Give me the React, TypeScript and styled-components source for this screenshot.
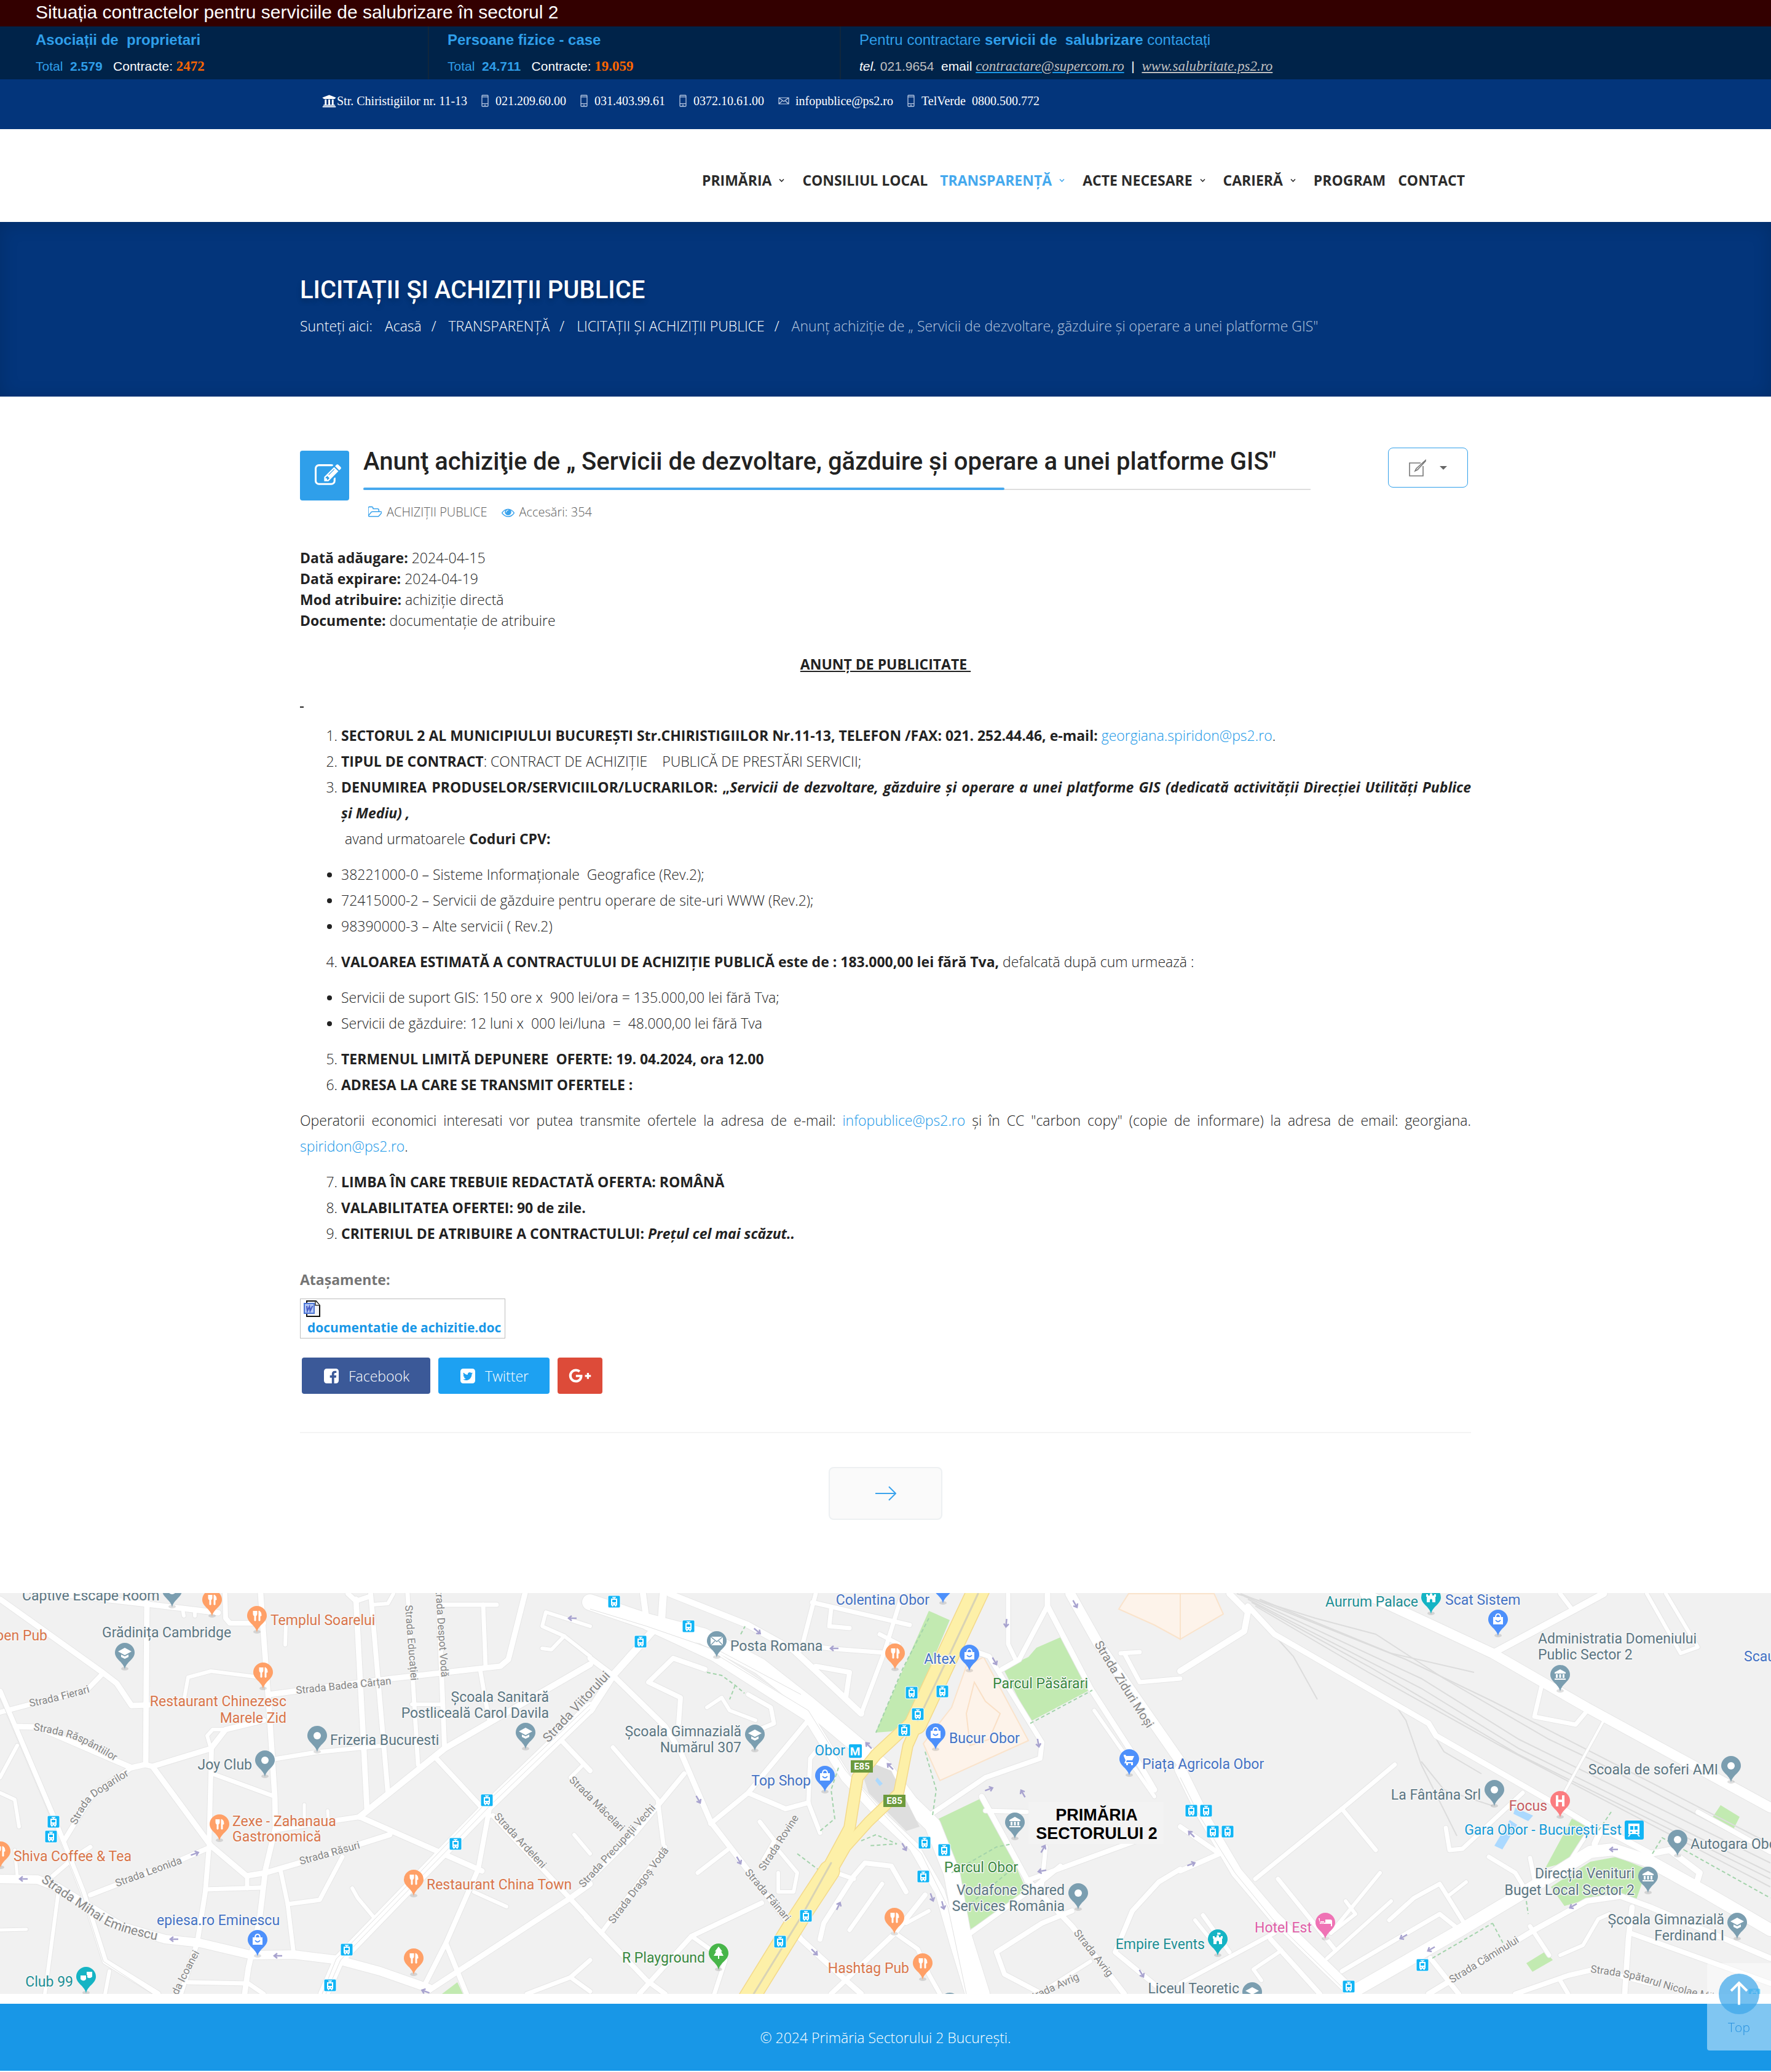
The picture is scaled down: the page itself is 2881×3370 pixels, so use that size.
import React from "react";
import styled, { createGlobalStyle } from "styled-components";
import { FaGooglePlusG, FaUniversity } from "react-icons/fa";

const sans = '"Open Sans", "Noto Sans", sans-serif';
const heading = 'Roboto, "Open Sans", sans-serif';
const arial = '"Liberation Sans", Arial, sans-serif';
const times = '"Liberation Serif", "Times New Roman", serif';

const color = {
  ink: "#222222",
  accent: "#1897e7",
  sky: "#2f9fea",
  navy: "#03357b",
};

const GlobalStyle = createGlobalStyle`
  * { box-sizing: border-box; }
  body {
    margin: 0;
    background: #fff;
    color: ${color.ink};
    font: 300 23px/42px ${sans};
  }
  a { color: inherit; text-decoration: none; }
  b, strong { font-weight: 700; }
  h1, h2, h3, p, ul, ol { margin: 0; padding: 0; }
  button { font: inherit; cursor: pointer; }
`;

const Container = styled.div`
  width: 100%;
  max-width: 1905px;
  margin: 0 auto;
`;

/* ---------- contract figures ---------- */

const Notice = styled.div`
  height: 43px;
  padding-left: 58px;
  background: #330000;
  color: #fff;
  font: 30px/40px ${arial};
`;

const Figures = styled.div`
  display: grid;
  grid-template-columns: 670fr 670fr 1513fr;
  padding-left: 28px;
  background: #002349;
  font: 21px/43px ${arial};
  color: #fff;
`;

const Figure = styled.section`
  padding-left: 30px;
  border-right: 2px solid #10263c;
  white-space: pre;
  &:last-child { border-right: 0; }
`;

const FigureTitle = styled.h2`
  color: ${color.sky};
  font-size: 24px;
  font-weight: 400;
`;

const Blue = styled.span`color: ${color.sky};`;

const Signed = styled.strong`
  color: #ff6600;
  font-family: ${times};
  font-size: 23px;
`;

const Soft = styled.span`color: #c0c0c0;`;

const SerifLink = styled.a<{ $line: string }>`
  color: #c0c0c0;
  font: italic 23px ${times};
  text-decoration: underline;
  text-decoration-color: ${(p) => p.$line};
`;

/* ---------- contact bar ---------- */

const ContactBar = styled.div`
  height: 81px;
  padding-top: 23px;
  background: ${color.navy};
  color: #fff;
  font: 20px/24px ${times};
`;

const ContactList = styled(Container)`
  display: flex;
  gap: 23px;
  padding-left: 36px;
`;

const Contact = styled.span<{ $gap: number }>`
  display: flex;
  align-items: center;
  gap: ${(p) => p.$gap}px;
  white-space: pre;
`;

const Phone = () => (
  <svg width="12" height="20" viewBox="0 0 12 20" fill="none" stroke="#b9c8e2" strokeWidth="1.3">
    <rect x="1" y="1" width="10" height="18" rx="1" />
    <path d="M1 3.6h10M1 14.6h10M5 17h2" />
  </svg>
);

const Mail = () => (
  <svg width="18" height="12" viewBox="0 0 18 12" fill="none" stroke="#c6d2e8" strokeWidth="1.2">
    <path d="M1 1h16v10H1zM1 1l8 6 8-6M1 11l6-5.5M17 11l-6-5.5" />
  </svg>
);

/* ---------- navigation ---------- */

const Nav = styled.nav`
  padding: 67px 0 51px;
  font-size: 23px;
  font-weight: 700;
  line-height: 33px;
`;

const NavList = styled(Container)`
  display: flex;
  justify-content: flex-end;
`;

const NavLink = styled.a<{ $active?: boolean }>`
  display: flex;
  align-items: center;
  padding: 0 10px;
  color: ${(p) => (p.$active ? "#45a9ee" : "#2b2b2b")};
  svg { margin: 0 9px 0 12px; }
`;

const Caret = () => (
  <svg width="9" height="7" viewBox="0 0 9 7" fill="none" stroke="currentColor" strokeWidth="1.6">
    <path d="M1 1.5l3.5 3.5L8 1.5" />
  </svg>
);

const menu = [
  { label: "PRIMĂRIA", more: true },
  { label: "CONSILIUL LOCAL" },
  { label: "TRANSPARENȚĂ", more: true, active: true },
  { label: "ACTE NECESARE", more: true },
  { label: "CARIERĂ", more: true },
  { label: "PROGRAM" },
  { label: "CONTACT" },
];

/* ---------- page heading ---------- */

const Hero = styled.header`
  padding: 87px 0 98px;
  background: ${color.navy};
  box-shadow: inset 0 3px 30px rgba(0, 0, 0, 0.15);
  color: #fff;
`;

const HeroTitle = styled.h1`
  font: 500 40px/48px ${heading};
  text-shadow: 0 5px 8px rgba(0, 0, 0, 0.2);
`;

const Crumbs = styled.div`
  display: flex;
  flex-wrap: wrap;
  margin-top: 18px;
  line-height: 33px;
`;

const Crumb = styled.a`
  margin-left: 20px;
  &:not(:last-child)::after { content: "/"; margin-left: 16px; }
`;

const CurrentCrumb = styled.span`
  margin-left: 20px;
  color: #b6c6de;
`;

/* ---------- article ---------- */

const Article = styled(Container)`
  padding-top: 82px;
`;

const ArticleHead = styled.header`
  display: flex;
  align-items: flex-start;
`;

const Badge = styled.div`
  display: grid;
  place-items: center;
  flex: none;
  width: 80px;
  height: 81px;
  margin: 6px 23px 0 0;
  padding-left: 10px;
  border-radius: 4px;
  background: ${color.sky};
  color: #fff;
`;

const TitleColumn = styled.div`flex: 1;`;

const Title = styled.h2`
  padding-bottom: 18px;
  font: 500 40px/48px ${heading};
`;

const Rule = styled.div`
  height: 4px;
  border-bottom: 2px solid #dedede;
  &::before {
    content: "";
    display: block;
    width: 1043px;
    max-width: 100%;
    height: 4px;
    border-radius: 2px;
    background: #47a9ee;
  }
`;

const Meta = styled.div`
  display: flex;
  align-items: center;
  gap: 8px;
  padding: 22px 0 0 8px;
  color: #5c5c5c;
  font-size: 20px;
  line-height: 28px;
  svg { color: #3ba3ec; }
  a { margin-right: 15px; }
`;

const Tools = styled.div`
  display: flex;
  justify-content: flex-end;
  flex: 0 0 261px;
  padding: 1px 5px 0 0;
`;

const ToolButton = styled.button`
  display: flex;
  align-items: center;
  justify-content: center;
  gap: 22px;
  width: 130px;
  height: 65px;
  border: 1px solid ${color.sky};
  border-radius: 8px;
  background: #fff;
`;

const Facts = styled.p`
  margin-top: 43px;
  line-height: 34px;
`;

const Heading = styled.h3`
  margin: 33px 0 16px;
  font-size: 23px;
  text-align: center;
  text-decoration: underline;
  white-space: pre;
`;

const Blank = styled.p`
  text-decoration: underline;
  white-space: pre;
`;

const Steps = styled.ol`
  margin-top: 16px;
  padding-left: 67px;
  text-align: justify;
`;

const Bullets = styled.ul`
  margin-top: 16px;
  padding-left: 67px;
`;

const Line = styled.span`
  display: block;
  white-space: pre;
`;

const Text = styled.p`
  margin-top: 16px;
  text-align: justify;
`;

const MailLink = styled.a`color: ${color.accent};`;

const FilesTitle = styled.h3`
  margin: 38px 0 14px;
  color: #757575;
  font-size: 23px;
  line-height: 33px;
`;

const FileTable = styled.table`
  border: 1px solid #bdbdbd;
  border-collapse: separate;
  border-spacing: 0;
  td { height: 63px; padding: 1px 6px 0 5px; vertical-align: top; }
  svg { display: block; }
`;

const FileLink = styled.a`
  display: block;
  padding-left: 6px;
  color: ${color.accent};
  font-size: 21px;
  font-weight: 700;
  line-height: 33px;
`;

const Share = styled.div`
  display: flex;
  gap: 13px;
  margin: 31px 0 62px 3px;
`;

const ShareLink = styled.a<{ $bg: string; $pad: number }>`
  display: flex;
  align-items: center;
  gap: 14px;
  height: 59px;
  padding: 0 ${(p) => p.$pad}px;
  border-radius: 4px;
  background: ${(p) => p.$bg};
  color: #fff;
`;

const Pager = styled.div`
  display: flex;
  justify-content: center;
  padding: 55px 0 119px;
  border-top: 2px solid #f4f4f4;
`;

const NextButton = styled.button`
  display: grid;
  place-items: center;
  width: 185px;
  height: 86px;
  border: 2px solid #edf0f2;
  border-radius: 8px;
  background: #fafafa;
`;

const Glyph = ({ size, d }: { size: number; d: string }) => (
  <svg width={size} height={size} viewBox="0 0 1792 1792" fill="currentColor" aria-hidden="true">
    <path d={d} />
  </svg>
);

const glyph = {
  edit: "M888 1184l116-116-152-152-116 116v56h96v96h56zm440-720q-16-16-33 1l-350 350q-17 17-1 33t33-1l350-350q17-17 1-33zm80 594v190q0 119-84.5 203.5t-203.5 84.5h-832q-119 0-203.5-84.5t-84.5-203.5v-832q0-119 84.5-203.5t203.5-84.5h832q63 0 117 25 15 7 18 23 3 17-9 29l-49 49q-14 14-32 8-23-6-45-6h-832q-66 0-113 47t-47 113v832q0 66 47 113t113 47h832q66 0 113-47t47-113v-126q0-13 9-22l64-64q15-15 35-7t20 29zm-96-738l288 288-672 672h-288v-288zm444 132l-92 92-288-288 92-92q28-28 68-28t68 28l152 152q28 28 28 68t-28 68z",
  folder: "M1717 931q0-35-53-35h-1088q-40 0-85.5 21.5t-71.5 52.5l-294 363q-18 24-18 40 0 35 53 35h1088q40 0 86-22t71-53l294-363q18-22 18-39zm-1141-163h768v-160q0-40-28-68t-68-28h-576q-40 0-68-28t-28-68v-64q0-40-28-68t-68-28h-320q-40 0-68 28t-28 68v853l256-315q44-53 116-87.5t140-34.5zm1269 163q0 62-46 120l-295 363q-43 53-116 87.5t-140 34.5h-1088q-92 0-158-66t-66-158v-960q0-92 66-158t158-66h320q92 0 158 66t66 158v32h544q92 0 158 66t66 158v160h192q54 0 99 24.5t67 70.5q15 32 15 68z",
  eye: "M1664 960q-152-236-381-353 61 104 61 225 0 185-131.5 316.5t-316.5 131.5-316.5-131.5-131.5-316.5q0-121 61-225-229 117-381 353 133 205 333.5 326.5t434.5 121.5 434.5-121.5 333.5-326.5zm-720-384q0-20-14-34t-34-14q-125 0-214.5 89.5t-89.5 214.5q0 20 14 34t34 14 34-14 14-34q0-86 61-147t147-61q20 0 34-14t14-34zm848 384q0 34-20 69-140 230-376.5 368.5t-499.5 138.5-499.5-139-376.5-368q-20-35-20-69t20-69q140-229 376.5-368t499.5-139 499.5 139 376.5 368q20 35 20 69z",
  facebook: "M1376 128q119 0 203.5 84.5t84.5 203.5v960q0 119-84.5 203.5t-203.5 84.5h-188v-595h199l30-232h-229v-148q0-56 23.5-84t91.5-28l122-1v-207q-63-9-178-9-136 0-217.5 80t-81.5 226v171h-200v232h200v595h-532q-119 0-203.5-84.5t-84.5-203.5v-960q0-119 84.5-203.5t203.5-84.5h960z",
  twitter: "M1408 610q-56 25-121 34 68-40 93-117-65 38-134 51-61-66-153-66-87 0-148.5 61.5t-61.5 148.5q0 29 5 48-129-7-242-65t-192-155q-29 50-29 106 0 114 91 175-47-1-100-26v2q0 75 50 133.5t123 72.5q-29 8-51 8-13 0-39-4 21 63 74.5 104t121.5 42q-116 90-261 90-26 0-50-3 148 94 322 94 112 0 210-35.5t168-95 120.5-137 75-162 24.5-168.5q0-18-1-27 63-45 105-109zm256-194v960q0 119-84.5 203.5t-203.5 84.5h-960q-119 0-203.5-84.5t-84.5-203.5v-960q0-119 84.5-203.5t203.5-84.5h960q119 0 203.5 84.5t84.5 203.5z",
};

const WordIcon = () => (
  <svg width="28" height="29" viewBox="0 0 28 29">
    <path d="M5 2h15l6 7v18H5z" fill="#f4f4f6" stroke="#111" strokeWidth="2" />
    <path d="M19 2v7h7" fill="#fff" stroke="#333" strokeWidth="1.5" />
    <rect x="1" y="6" width="16" height="16" fill="#b5c9f6" stroke="#4a74d4" strokeWidth="2" />
    <path d="M5 10l1 8 3.5-7 1 7 4-8" fill="none" stroke="#4a5fc8" strokeWidth="2.2" />
  </svg>
);

/* ---------- map ---------- */

type Pt = [number, number];

// The drawing is split in three sheets laid side by side, each with its own grid.
const place = (sheet: number, x: number, y: number): Pt => [
  Math.round(sheet * 960 + x * 0.6123),
  Math.round(y * 0.5166 - 31),
];

const placeAll = (sheet: number, points: string): Pt[] =>
  points.split(" ").map((p) => place(sheet, ...(p.split(",").map(Number) as Pt)));

const trace = (sheet: number, points: string) =>
  placeAll(sheet, points).map((p) => p.join(",")).join(" ");

// Rounds the corners of a street so that its name runs along a smooth line.
const curve = (sheet: number, points: string) => {
  const pts = placeAll(sheet, points);
  let d = `M${pts[0].join(" ")}`;
  if (pts.length === 2) return `${d}L${pts[1].join(" ")}`;
  for (let i = 1; i < pts.length - 1; i++) {
    const last = i === pts.length - 2;
    const end = last ? pts[i + 1] : [(pts[i][0] + pts[i + 1][0]) / 2, (pts[i][1] + pts[i + 1][1]) / 2];
    d += `Q${pts[i].join(" ")} ${end.join(" ")}`;
  }
  return d;
};

const roads: [number, number, string][] = [
  [0, 9, "0,80 275,312 310,345 350,415 395,412"],
  [0, 8, "0,435 100,405 230,365 275,312"],
  [0, 9, "390,90 387,600"],
  [0, 9, "150,61 390,95 580,122"],
  [0, 6, "485,110 488,132"],
  [0, 6, "517,115 518,132"],
  [0, 8, "598,61 600,140 610,155 700,155"],
  [0, 9, "692,61 700,200 715,430 730,700 732,800 705,930 690,1090 660,1240 650,1323"],
  [0, 6, "490,390 500,325 560,305 690,325"],
  [0, 6, "760,160 757,222"],
  [0, 9, "715,380 1040,330 1330,290 1350,270 1395,61"],
  [0, 9, "945,80 975,740"],
  [0, 8, "985,61 1030,690"],
  [0, 8, "925,61 945,85 985,70"],
  [0, 6, "990,96 1030,92 1045,61"],
  [0, 7, "1083,61 1110,600"],
  [0, 8, "1165,61 1180,540"],
  [0, 7, "1165,97 1320,97"],
  [0, 7, "1283,97 1290,295"],
  [0, 7, "1275,300 1290,400 1300,460"],
  [0, 6, "1095,410 1170,410"],
  [0, 10, "1568,285 1180,550 955,765"],
  [0, 8, "955,765 900,775 735,805"],
  [0, 9, "955,765 1280,935"],
  [0, 9, "40,480 100,482 350,610 385,600 405,605 560,550 600,490 700,460"],
  [0, 6, "560,550 550,510 565,490 600,490"],
  [0, 9, "405,605 560,855 655,950 705,940 840,895 1035,820"],
  [0, 8, "562,550 555,860 545,1000 525,1160 480,1323"],
  [0, 7, "565,630 730,700"],
  [0, 7, "730,583 840,562 1020,540"],
  [0, 8, "350,610 250,690 205,770 170,840"],
  [0, 9, "0,370 140,760 220,1000 280,1220 420,1323"],
  [0, 6, "0,640 45,540"],
  [0, 6, "0,690 40,710 50,795"],
  [0, 14, "0,960 100,962 150,985 320,1110 440,1150 530,1162 670,1200 780,1198 900,1215 1010,1250 1140,1305"],
  [0, 9, "1140,1310 1515,1020 1568,975"],
  [0, 8, "240,1010 480,900 560,860"],
  [0, 7, "140,950 200,890 240,860"],
  [0, 6, "155,1000 120,1323"],
  [0, 5, "0,1120 70,1118"],
  [0, 7, "545,993 695,988"],
  [0, 7, "657,950 657,990"],
  [0, 7, "745,930 765,1040 780,1200"],
  [0, 7, "765,1040 850,1025 910,890"],
  [0, 6, "935,990 950,1020 1000,1090"],
  [0, 8, "1300,740 1270,930 1185,1160 1125,1300"],
  [0, 6, "1260,1000 1345,1048"],
  [0, 8, "1185,1165 1240,1323"],
  [0, 7, "500,1285 660,1290 700,1323"],
  [0, 6, "280,1323 290,1250"],
  [0, 8, "1155,575 1300,760"],
  [0, 8, "1310,760 1568,1090"],
  [0, 8, "1480,510 1568,620"],
  [0, 6, "1515,640 1550,600"],
  [0, 6, "1568,165 1450,120 1440,165 1500,195 1568,260"],
  [0, 6, "1500,195 1465,238 1440,235"],
  [0, 7, "1400,1323 1515,1270 1568,1215"],
  [0, 7, "1515,1270 1568,1315"],
  [0, 6, "1525,820 1568,880"],
  [0, 5, "40,870 45,950"],
  [0, 5, "808,725 808,790"],
  [0, 5, "870,745 872,775"],
  [0, 18, "1568,420 1300,725 1100,970 900,1215 860,1323"],

  [1, 26, "0,90 150,150 300,195 450,290 580,410 700,530 780,610 850,720 910,790 960,940 990,1130 1040,1323"],
  [1, 16, "150,160 330,260 580,450 680,640 780,770 860,860 930,1000 970,1170 1010,1323"],
  [1, 12, "0,430 60,320 190,150 195,61"],
  [1, 10, "150,150 140,61"],
  [1, 9, "0,265 60,320 200,480 240,560 320,780 560,1150 680,1280 720,1323"],
  [1, 8, "320,785 420,690 580,460"],
  [1, 8, "420,690 520,740 580,720"],
  [1, 7, "610,815 580,720 585,580 600,560"],
  [1, 8, "250,630 110,830 0,960"],
  [1, 8, "-10,1080 150,1280 200,1323"],
  [1, 7, "200,860 30,1130"],
  [1, 7, "60,545 180,710 195,850"],
  [1, 8, "130,1323 270,1140 455,1035"],
  [1, 7, "270,1140 360,1215 330,1323"],
  [1, 6, "310,420 350,390 370,430 440,460"],
  [1, 7, "420,380 480,420 488,470 430,500"],
  [1, 8, "305,300 220,265 155,340 240,390 235,470"],
  [1, 10, "210,61 420,160 540,240 640,350 720,440"],
  [1, 7, "600,61 560,240"],
  [1, 7, "590,90 850,160"],
  [1, 7, "640,110 635,165 690,170"],
  [1, 7, "570,225 650,237 780,248"],
  [1, 8, "600,290 690,310 680,390"],
  [1, 7, "830,61 780,250 720,440"],
  [1, 7, "770,190 820,220"],
  [1, 6, "500,870 550,940 540,1000 500,1000 500,940"],
  [1, 7, "365,870 285,940"],
  [1, 7, "450,780 490,840 460,900"],
  [1, 7, "775,975 690,1120"],
  [1, 8, "610,1150 620,1100 700,950 730,910 800,920 840,1000"],
  [1, 7, "640,935 700,960"],
  [1, 8, "640,1323 810,1130 890,1010"],
  [1, 7, "810,1130 870,1180 900,1260 930,1323"],
  [1, 6, "840,1100 900,1060"],
  [1, 16, "1275,61 1350,220 1568,590"],
  [1, 9, "1215,61 1215,100 1330,360 1460,600 1500,680"],
  [1, 8, "1215,100 1140,270 1095,300"],
  [1, 7, "1110,61 1110,220 1130,270"],
  [1, 8, "1000,235 1060,260 1200,530 1195,580 1050,640 900,760"],
  [1, 9, "1040,700 1160,960 1280,1110 1420,1323"],
  [1, 8, "1160,965 1450,840"],
  [1, 8, "1000,1140 1180,985 1250,920"],
  [1, 7, "1200,980 1210,860"],
  [1, 8, "1568,930 1510,970 1440,1060 1395,1190 1530,1323"],
  [1, 8, "1080,1190 1200,1100 1280,1060"],
  [1, 8, "1080,1190 1100,1260 1200,1323"],
  [1, 6, "1220,1300 1330,1220"],
  [1, 6, "1340,430 1500,700"],
  [1, 7, "1420,250 1460,340 1568,330"],
  [1, 7, "1410,250 1460,245"],
  [1, 7, "1050,745 1160,750"],

  [2, 16, "490,61 830,250 1080,420 1568,735"],
  [2, 11, "830,250 1050,110 1125,61"],
  [2, 7, "1010,61 1040,110"],
  [2, 10, "130,61 180,120 170,180 0,305"],
  [2, 9, "180,100 250,190 660,470 680,510 990,720 1100,800"],
  [2, 20, "460,1315 740,1125 1000,940 1090,875 1150,868 1250,905 1400,1005 1568,1120"],
  [2, 10, "1100,850 1120,800 1250,880 1300,870 1380,940 1370,980"],
  [2, 18, "0,615 60,760 150,940 250,1080 460,1323"],
  [2, 7, "200,960 430,740 570,600"],
  [2, 7, "430,740 520,870"],
  [2, 7, "260,960 410,1180"],
  [2, 7, "430,1250 560,1160 690,1070 730,1110"],
  [2, 7, "555,1090 620,1020 690,975 760,1110"],
  [2, 6, "715,1010 760,970"],
  [2, 6, "390,1210 560,1030"],
  [2, 6, "400,1130 530,940"],
  [2, 6, "440,1030 465,1070 400,1130"],
  [2, 7, "705,800 715,870 750,865 910,690"],
  [2, 7, "820,890 890,940 910,980"],
  [2, 7, "930,895 940,960"],
  [2, 7, "960,350 940,450 1050,475 1085,425"],
  [2, 4, "1125,460 1015,700"],
  [2, 6, "1240,61 1330,250 1375,230 1290,61"],
  [2, 8, "1375,750 1568,875"],
  [2, 9, "660,1323 940,1120 1080,1030 1170,1015 1250,1050 1568,1210"],
  [2, 9, "1200,1050 1190,1150 1180,1323"],
  [2, 8, "1195,1130 1568,1290"],
  [2, 8, "890,1323 1030,1265 1100,1245 1250,1290"],
  [2, 7, "1010,1280 1030,1323"],
  [2, 8, "0,795 105,880 0,935"],
  [2, 7, "0,1290 250,1130"],
  [2, 7, "60,1075 130,1190"],
  [2, 6, "40,1090 80,1150"],
  [2, 8, "240,1150 370,1323"],
  [2, 6, "270,1185 195,1245 215,1280"],
  [2, 8, "665,1210 740,1323"],
  [2, 7, "930,1110 980,1200"],
  [2, 6, "1010,1200 1070,1170 1110,1085 1140,1070"],
  [2, 6, "1080,820 1020,930"],
];

const rails: [number, string][] = [
  [2, "150,61 360,140 520,190 700,330 980,520 1120,600 1568,880"],
  [2, "160,61 600,270 830,400 1568,850"],
  [2, "170,70 640,330 900,520 1568,910"],
  [2, "180,80 640,360 900,550 1568,940"],
  [2, "190,90 500,290 900,570 1568,960"],
  [2, "200,100 500,310 850,540 1568,985"],
  [2, "210,80 560,250 780,310"],
  [2, "240,180 300,260 365,395"],
  [2, "570,410 600,460 640,600 735,825"],
  [2, "640,590 700,680 830,730"],
  [2, "670,500 700,560 800,630"],
];

const tramLines: [number, string][] = [
  [0, "0,390 140,780 215,1000 275,1220 405,1323"],
  [0, "1568,425 1305,725 1105,970 905,1215 865,1323"],
  [0, "1568,410 1290,722 1095,965 893,1212 855,1323"],
  [1, "330,250 580,430 680,620 790,770 880,880 950,1050 1000,1323"],
  [1, "0,110 150,165 350,245 560,380"],
  [2, "0,640 50,760 145,940 245,1085 430,1300"],
];

const park = "#c2eab1";
const mall = "#fdf3ea";
const water = "#abd9ff";

const areas: [number, string, string][] = [
  [1, park, "900,117 955,145 840,470 800,495 757,500"],
  [1, park, "1098,298 1165,262 1185,232 1250,200 1333,362 1170,465"],
  [1, park, "1045,703 920,775 960,930 1000,1125 1060,1085 1165,1010 1080,780"],
  [1, mall, "1045,262 1165,525 930,650 885,535 960,420 1000,290"],
  [1, mall, "1430,61 1568,61 1568,205 1500,160 1405,110"],
  [2, mall, "0,61 90,61 115,125 0,205"],
  [0, park, "1175,1323 1215,1285 1230,1323"],
  [2, park, "970,925 1040,770 1090,800 1030,905"],
  [2, park, "1020,1045 985,985 1090,905 1160,890 1240,930 1210,1030 1120,1010"],
  [2, park, "1435,727 1487,765 1470,803 1413,768"],
  [2, park, "920,1225 970,1188 990,1215 935,1253"],
  [2, water, "835,855 875,775 895,790 855,868"],
  [2, water, "890,735 938,760 925,778 885,755"],
];

const footpaths: [number, string][] = [
  [1, "900,140 830,300 760,500"],
  [1, "1170,470 1335,365"],
  [1, "400,190 412,165"],
  [1, "310,310 350,320 385,350 410,375"],
  [1, "385,350 370,395"],
  [1, "720,840 760,820 815,850 740,855"],
  [1, "660,610 640,680 650,770 610,810"],
  [1, "890,560 920,680 910,760"],
  [1, "550,880 605,930"],
  [1, "960,940 1080,860 1120,850"],
  [1, "1000,1050 1120,930"],
  [2, "1340,870 1568,1020"],
  [2, "920,1030 925,1070"],
  [2, "1145,750 1110,810"],
  [2, "830,1100 860,1170"],
  [2, "1255,880 1280,830 1340,870"],
  [2, "670,1210 830,1100"],
];

const highway = [
  { width: 34, points: "1040,30 960,230 865,470" },
  { width: 17, points: "850,470 760,570 710,640 690,800 620,950" },
  { width: 15, points: "870,470 845,540 820,690 740,780 680,860 630,960" },
  { width: 32, points: "635,935 560,1070 415,1350" },
];

type PinKind = "food" | "school" | "dot" | "bag" | "cart" | "mail" | "hall" | "bed" | "castle" | "tree" | "h" | "mask";

const glyphs: Record<PinKind, React.ReactNode> = {
  food: <path d="M-6-8v5q0 3 2 3v8h2v-8q2 0 2-3v-5M-3-8v6M3 8v-16q4 1 4 8h-2v8z" fill="#fff" stroke="#fff" strokeWidth="1" />,
  school: <path d="M0-8l11 6-11 6-11-6zM-6 3l6 3 6-3v4l-6 3-6-3z" fill="#fff" />,
  dot: <circle r="6" fill="#fff" />,
  bag: (
    <g fill="none" stroke="#fff" strokeWidth="2">
      <path d="M-4-3q0-6 4-6t4 6" />
      <path d="M-7-3H7V7H-7z" fill="#fff" />
      <path d="M-4 1q4 5 8 0" stroke="#4d90fb" />
    </g>
  ),
  cart: <path d="M-9-7h3l1 2H8L5 2H-4l-1 3H6v2H-8l2-5-3-7zM-5 7h3v3h-3zM3 7h3v3H3z" fill="#fff" />,
  mail: (
    <g>
      <rect x="-10" y="-7" width="20" height="14" fill="#fff" />
      <path d="M-10-7L0 1l10-8M-10 7l7-7M10 7L3 0" fill="none" stroke="#7b9eb0" strokeWidth="1.5" />
    </g>
  ),
  hall: <path d="M-9-4l9-5 9 5v2H-9zM-7-1h3v6h-3zM-1.5-1h3v6h-3zM4-1h3v6H4zM-9 6H9v2H-9z" fill="#fff" />,
  bed: <path d="M-11-7h2v9h18v4h2v-8q0-3-3-3h-8v5h-9zM-8-2h6v3h-6z" fill="#fff" />,
  castle: (
    <g>
      <path d="M0-11v5M0-10h4v2H0z" fill="#fff" stroke="#fff" strokeWidth="1" />
      <path d="M-8-5h3v2h3v-3h4v3h3v-2h3V-1H7v9H-7v-9h-1z" fill="#fff" />
      <path d="M-2 8V4q2-3 4 0v4z" fill="#15b4c4" />
    </g>
  ),
  tree: <path d="M0-11L6-3H4l4 7H1v5h-2V4h-7l4-7h-2z" fill="#fff" />,
  h: <path d="M-7-9h4v7h6v-7h4V9H3V2h-6v7h-4z" fill="#fff" />,
  mask: <path d="M-9-2h9v6q-4 5-9 0zM1-8h9v8q-4 4-8 1v-4H1z" fill="#fff" />,
};

const grey = "#7b9eb0";
const orange = "#ffa067";
const blue = "#4d90fb";
const teal = "#15b4c4";

const pins: [number, number, number, PinKind, string][] = [
  [0, 458, 53, "dot", grey],
  [0, 564, 82, "food", orange],
  [0, 682, 131, "food", orange],
  [0, 331, 247, "school", grey],
  [0, 699, 310, "food", orange],
  [0, 842, 509, "dot", grey],
  [0, 704, 586, "dot", grey],
  [0, 1397, 500, "school", grey],
  [0, 583, 788, "food", orange],
  [0, 2, 873, "food", orange],
  [0, 1099, 963, "food", orange],
  [0, 1099, 1210, "food", orange],
  [0, 685, 1152, "bag", blue],
  [0, 228, 1268, "mask", teal],
  [1, 337, 211, "mail", grey],
  [1, 810, 250, "food", orange],
  [1, 937, 40, "bag", blue],
  [1, 1008, 253, "bag", blue],
  [1, 437, 505, "school", grey],
  [1, 918, 502, "bag", blue],
  [1, 624, 634, "bag", blue],
  [1, 1432, 583, "cart", blue],
  [1, 1129, 782, "hall", grey],
  [1, 1297, 1005, "dot", grey],
  [1, 808, 1082, "food", orange],
  [1, 883, 1226, "food", orange],
  [1, 342, 1194, "tree", "#47b549"],
  [1, 955, 1350, "dot", grey],
  [2, 667, 74, "castle", teal],
  [2, 845, 143, "bag", blue],
  [2, 1010, 317, "hall", grey],
  [2, 1464, 603, "dot", grey],
  [2, 834, 679, "dot", grey],
  [2, 1010, 714, "h", "#fb7d80"],
  [2, 1321, 836, "dot", grey],
  [2, 1243, 953, "hall", grey],
  [2, 1480, 1098, "school", grey],
  [2, 386, 1098, "bed", "#ef73b5"],
  [2, 99, 1150, "castle", teal],
  [2, 191, 1316, "school", grey],
];

const stops: [number, number, number][] = [
  [0, 142, 781], [0, 136, 827], [0, 1294, 713], [0, 1210, 849], [0, 921, 1183], [0, 877, 1295],
  [1, 64, 88], [1, 134, 212], [1, 261, 165], [1, 854, 373], [1, 935, 370], [1, 870, 441], [1, 835, 492],
  [1, 889, 846], [1, 940, 869], [1, 886, 952], [1, 574, 1077], [1, 505, 1157],
  [2, 29, 746], [2, 69, 746], [2, 86, 812], [2, 126, 812], [2, 643, 1232], [2, 448, 1299], [2, 1525, 1325],
];

const arrows: [number, number, number, number][] = [
  [0, 62, 960, 180], [0, 463, 1150, 180], [0, 738, 1202, 180], [0, 518, 880, -20], [0, 1130, 1314, 200], [0, 1520, 140, 180],
  [1, 445, 180, 40], [1, 648, 235, 180], [1, 287, 710, 60], [1, 395, 903, 60], [1, 596, 1190, 45], [1, 740, 540, 225],
  [1, 797, 605, 225], [1, 835, 860, 60], [1, 908, 1018, 70], [1, 937, 1043, 75], [1, 660, 1045, -65], [1, 1106, 155, 95],
  [1, 1288, 95, 60], [1, 1075, 275, 60], [1, 1190, 533, 80], [1, 1060, 678, -20], [1, 1150, 692, 240], [1, 1203, 865, -60],
  [1, 1200, 935, 170], [1, 1465, 1258, 60], [2, 30, 818, 225], [2, 30, 914, -20], [2, 593, 1142, 150], [2, 667, 1180, 150],
  [2, 1043, 1045, 150], [2, 1152, 867, 180],
];

const ink = {
  grey: "#5b7683",
  orange: "#d9754a",
  blue: "#4472c4",
  teal: "#1c8f95",
  green: "#39893f",
  cyan: "#169bd8",
};

const places: [number, number, number, "start" | "end", string, string][] = [
  [0, 58, 84, "start", ink.grey, "Captive Escape Room"],
  [0, 718, 161, "start", ink.orange, "Templul Soarelui"],
  [0, 125, 209, "end", ink.orange, "Open Pub"],
  [0, 271, 200, "start", ink.grey, "Grădinița Cambridge"],
  [0, 761, 417, "end", ink.orange, "Restaurant Chinezesc"],
  [0, 761, 468, "end", ink.orange, "Marele Zid"],
  [0, 1459, 402, "end", ink.grey, "Școala Sanitară"],
  [0, 1459, 453, "end", ink.grey, "Postliceală Carol Davila"],
  [0, 877, 539, "start", ink.grey, "Frizeria Bucuresti"],
  [0, 670, 616, "end", ink.grey, "Joy Club"],
  [0, 617, 793, "start", ink.orange, "Zexe - Zahanaua"],
  [0, 617, 843, "start", ink.orange, "Gastronomică"],
  [0, 36, 904, "start", ink.orange, "Shiva Coffee & Tea"],
  [0, 1134, 993, "start", ink.orange, "Restaurant China Town"],
  [0, 417, 1105, "start", ink.blue, "epiesa.ro Eminescu"],
  [0, 194, 1298, "end", ink.teal, "Club 99"],
  [1, 902, 97, "end", ink.blue, "Colentina Obor"],
  [1, 372, 241, "start", ink.grey, "Posta Romana"],
  [1, 972, 283, "end", ink.blue, "Altex"],
  [1, 1070, 360, "start", ink.green, "Parcul Păsărari"],
  [1, 402, 511, "end", ink.grey, "Școala Gimnazială"],
  [1, 402, 562, "end", ink.grey, "Numărul 307"],
  [1, 953, 533, "start", ink.blue, "Bucur Obor"],
  [1, 678, 572, "end", ink.cyan, "Obor"],
  [1, 587, 665, "end", ink.blue, "Top Shop"],
  [1, 1467, 614, "start", ink.blue, "Piața Agricola Obor"],
  [1, 940, 939, "start", ink.green, "Parcul Obor"],
  [1, 1261, 1010, "end", ink.grey, "Vodafone Shared"],
  [1, 1261, 1061, "end", ink.grey, "Services România"],
  [1, 305, 1224, "end", ink.green, "R Playground"],
  [1, 848, 1256, "end", ink.orange, "Hashtag Pub"],
  [2, 65, 1180, "end", ink.teal, "Empire Events"],
  [2, 156, 1321, "end", ink.grey, "Liceul Teoretic"],
  [2, 632, 103, "end", ink.teal, "Aurrum Palace"],
  [2, 704, 97, "start", ink.blue, "Scat Sistem"],
  [2, 950, 219, "start", ink.grey, "Administratia Domeniului"],
  [2, 950, 270, "start", ink.grey, "Public Sector 2"],
  [2, 1497, 274, "start", ink.blue, "Scaune"],
  [2, 1429, 632, "end", ink.grey, "Scoala de soferi AMI"],
  [2, 798, 710, "end", ink.grey, "La Fântâna Srl"],
  [2, 975, 745, "end", "#c65b60", "Focus"],
  [2, 1172, 821, "end", ink.cyan, "Gara Obor - București Est"],
  [2, 1355, 865, "start", ink.grey, "Autogara Obor"],
  [2, 1207, 959, "end", ink.grey, "Direcția Venituri"],
  [2, 1207, 1010, "end", ink.grey, "Buget Local Sector 2"],
  [2, 1445, 1103, "end", ink.grey, "Școala Gimnazială"],
  [2, 1445, 1154, "end", ink.grey, "Ferdinand I"],
  [2, 350, 1128, "end", "#df5fa8", "Hotel Est"],
];

const streets: [number, string, number, string][] = [
  [0, "80,418 160,400 250,368", 17, "Strada Fierari"],
  [0, "88,492 180,510 250,550 320,600", 17, "Strada Răspântiilor"],
  [0, "203,792 230,720 280,680 350,630", 17, "Strada Dogarilor"],
  [0, "787,377 1060,344", 17, "Strada Badea Cârțan"],
  [0, "1077,98 1093,350", 17, "Strada Educației"],
  [0, "1157,35 1174,350", 17, "Strada Despot Vodă"],
  [0, "310,985 500,904", 17, "Strada Leonida"],
  [0, "799,915 980,855", 17, "Strada Răsuri"],
  [0, "1312,765 1480,980", 17, "Strada Ardeleni"],
  [0, "108,968 220,1060 320,1135 470,1166", 21, "Strada Mihai Eminescu"],
  [0, "450,1380 490,1280 535,1180", 17, "Strada Icoanei"],
  [0, "1456,532 1660,275", 21, "Strada Viitorului"],
  [0, "1510,650 1660,825", 17, "Strada Măcelari"],
  [0, "1550,990 1780,690", 17, "Strada Precupeții Vechi"],
  [1, "62,1103 225,845", 17, "Strada Dragoș Vodă"],
  [1, "463,937 570,740", 17, "Strada Rovine"],
  [1, "410,940 545,1130", 17, "Strada Făinari"],
  [1, "1340,220 1420,380 1520,560", 20, "Strada Ziduri Moși"],
  [1, "1284,1130 1400,1305", 17, "Strada Avrig"],
  [1, "1165,1350 1330,1260", 17, "Strada Avrig"],
  [2, "722,1290 930,1138", 17, "Strada Căminului"],
  [2, "1090,1255 1200,1270 1300,1312 1440,1350", 17, "Strada Spătarul Nicolae Milescu"],
];

const MapDrawing = styled.svg`
  display: block;
  width: 100%;
  height: auto;
  margin-bottom: 16px;
  background: #f1f1f1;
  font-family: ${heading};
  font-weight: 400;
`;

const CityMap = () => (
  <MapDrawing viewBox="0 0 2881 652" role="img" aria-label="Harta: Primăria Sectorului 2">
    {areas.map(([s, fill, d]) => (
      <polygon key={d} points={trace(s, d)} fill={fill} stroke={fill === mall ? "#fae3cb" : "none"} strokeWidth="2" />
    ))}
    <g fill="none" stroke="#dcdcdc" strokeWidth="2">
      {rails.map(([s, d]) => <polyline key={d} points={trace(s, d)} />)}
    </g>
    <g fill="none" strokeLinecap="round" strokeLinejoin="round">
      {roads.map(([s, w, d]) => <polyline key={d} points={trace(s, d)} stroke="#e6e6e6" strokeWidth={w + 2} />)}
      {roads.map(([s, w, d]) => <polyline key={d} points={trace(s, d)} stroke="#fff" strokeWidth={w} />)}
    </g>
    <g fill="none" stroke="#e0e0e0" strokeWidth="1">
      {tramLines.map(([s, d]) => <polyline key={d} points={trace(s, d)} />)}
    </g>
    <polygon points={trace(1, "720,620 760,600 800,620 875,795 840,810 740,690")} fill="#dedede" />
    <polygon points={trace(1, "763,640 778,660 770,668 758,650")} fill="#abd9ff" />
    <g fill="none" strokeLinejoin="round" strokeLinecap="round">
      {highway.map((h) => <polyline key={h.points} points={trace(1, h.points)} stroke="#f3d98a" strokeWidth={h.width + 3} />)}
      {highway.map((h) => <polyline key={h.points} points={trace(1, h.points)} stroke="#fdf0a8" strokeWidth={h.width} />)}
      <polyline points={trace(1, "1030,61 960,240 870,460")} stroke="#d9d3b4" strokeWidth="3" />
      <polyline points={trace(1, "640,910 560,1080 435,1323")} stroke="#d9d3b4" strokeWidth="3" />
    </g>
    <g fill="none" stroke="#a3d3ab" strokeWidth="2" strokeDasharray="6 4">
      {footpaths.map(([s, d]) => <polyline key={d} points={trace(s, d)} />)}
    </g>
    <polygon points={trace(1, "1020,340 1050,400 1090,440 1060,520 1010,540 1000,440")} fill="none" stroke="#fae0c6" strokeWidth="2" />
    <g stroke="#a8a3cf" strokeWidth="2.5" fill="none">
      {arrows.map(([s, x, y, turn]) => {
        const [px, py] = place(s, x, y);
        return <path key={`${s}-${x}-${y}`} d="M-7 0H6M1-4l5 4-5 4" transform={`translate(${px} ${py}) rotate(${turn})`} />;
      })}
    </g>

    <g fill="#858585" stroke="#f5f5f5" strokeWidth="3" paintOrder="stroke" strokeLinejoin="round">
      {streets.map(([s, d, size, name], i) => (
        <React.Fragment key={i}>
          <path id={`street-${i}`} d={curve(s, d)} fill="none" stroke="none" />
          <text fontSize={size}>
            <textPath href={`#street-${i}`}>{name}</textPath>
          </text>
        </React.Fragment>
      ))}
    </g>

    {stops.map(([s, x, y]) => {
      const [px, py] = place(s, x, y);
      return (
        <g key={`${s}-${x}-${y}`} transform={`translate(${px} ${py})`}>
          <rect x="-10" y="-10" width="20" height="20" rx="2" fill="#12b5f5" stroke="#fff" />
          <path d="M-3-7h6M0-7v3" stroke="#fff" strokeWidth="1.5" />
          <path d="M-5-5h10V5l-2 3h-1L1 6h-2l-1 2h-1l-2-3z" fill="#fff" />
          <path d="M-3-3h6v4h-6zM-3 3h1.5v1.5H-3zM1.5 3H3v1.5H1.5z" fill="#12b5f5" />
        </g>
      );
    })}

    {pins.map(([s, x, y, kind, fill]) => {
      const [px, py] = place(s, x, y);
      return (
        <g key={`${s}-${x}-${y}`} transform={`translate(${px} ${py})`}>
          <ellipse cy="26" rx="6" ry="3" fill="#000" opacity="0.12" />
          <path d="M0 27C-2 15-16 11-16 0A16 16 0 1 1 16 0C16 11 2 15 0 27Z" fill={fill} />
          {glyphs[kind]}
        </g>
      );
    })}

    <g transform="translate(1391 257)">
      <rect x="-10" y="-11" width="21" height="22" rx="2" fill="#12b5f5" />
      <text y="7" textAnchor="middle" fontSize="19" fontWeight="700" fill="#fff">M</text>
    </g>
    <g transform="translate(2658 385)">
      <rect x="-15" y="-15" width="31" height="31" rx="3" fill="#12b5f5" />
      <path d="M-8-9H8V6H-8zM-6 7l-3 4M6 7l3 4" fill="#fff" stroke="#fff" strokeWidth="2" />
      <path d="M-6-6h5v6h-5zM1-6h5v6H1zM-6 3h3v2h-3zM3 3h3v2H3z" fill="#12b5f5" />
    </g>
    {[[1402, 282], [1455, 338]].map(([x, y]) => (
      <g key={x} transform={`translate(${x} ${y})`}>
        <rect x="-18" y="-10" width="36" height="20" fill="#6c9a3d" />
        <text y="5" textAnchor="middle" fontSize="15" fontWeight="700" fill="#fff">E85</text>
      </g>
    ))}

    <g fontSize="23" stroke="#f7f7f7" strokeWidth="3" paintOrder="stroke" strokeLinejoin="round">
      {places.map(([s, x, y, anchor, fill, name]) => {
        const [px, py] = place(s, x, y);
        return <text key={name + x} x={px} y={py} textAnchor={anchor} fill={fill}>{name}</text>;
      })}
    </g>

    <rect x="1673" y="340" width="220" height="68" fill="#f3f3f3" />
    <g fontFamily="Liberation Sans, Arial, sans-serif" fontWeight="700" fontSize="27" textAnchor="middle" fill="#000">
      <text x="1784" y="370">PRIMĂRIA</text>
      <text x="1784" y="400">SECTORULUI 2</text>
    </g>
  </MapDrawing>
);

/* ---------- footer ---------- */

const Footer = styled.footer`
  height: 109px;
  padding-top: 34px;
  background: ${color.accent};
  color: #fff;
  text-align: center;
`;

const TopLink = styled.a`
  position: fixed;
  right: 0;
  bottom: 35px;
  display: flex;
  flex-direction: column;
  align-items: center;
  width: 104px;
  height: 142px;
  padding-top: 17px;
  border-radius: 4px 0 0 4px;
  background: rgba(255, 255, 255, 0.45);
  color: #2a93e0;
  font-size: 21px;
  line-height: 42px;
  svg { opacity: 0.7; }
`;

export default function App() {
  return (
    <>
      <GlobalStyle />
      <Notice>Situația contractelor pentru serviciile de salubrizare în sectorul 2</Notice>
      <Figures>
        <Figure>
          <FigureTitle><b>{"Asociații de  proprietari"}</b></FigureTitle>
          <p><Blue>{"Total  "}<b>2.579</b></Blue>{"   Contracte: "}<Signed>2472</Signed></p>
        </Figure>
        <Figure>
          <FigureTitle><b>Persoane fizice - case</b></FigureTitle>
          <p><Blue>{"Total  "}<b>24.711</b></Blue>{"   Contracte: "}<Signed>19.059</Signed></p>
        </Figure>
        <Figure>
          <FigureTitle>Pentru contractare <b>{"servicii de  salubrizare"}</b> contactați</FigureTitle>
          <p>
            <em>tel.</em> <Soft>021.9654</Soft>{"  email "}
            <SerifLink href="mailto:contractare@supercom.ro" $line={color.accent}>contractare@supercom.ro</SerifLink>
            {"  |  "}
            <SerifLink href="#salubritate" $line="#c0c0c0">www.salubritate.ps2.ro</SerifLink>
          </p>
        </Figure>
      </Figures>

      <ContactBar>
        <ContactList>
          <Contact $gap={1}><FaUniversity size={23} />Str. Chiristigiilor nr. 11-13</Contact>
          <Contact $gap={11}><Phone />021.209.60.00</Contact>
          <Contact $gap={11}><Phone />031.403.99.61</Contact>
          <Contact $gap={11}><Phone />0372.10.61.00</Contact>
          <Contact $gap={10}><Mail />infopublice@ps2.ro</Contact>
          <Contact $gap={11}><Phone />{"TelVerde  0800.500.772"}</Contact>
        </ContactList>
      </ContactBar>

      <Nav>
        <NavList>
          {menu.map((m) => (
            <NavLink key={m.label} href="#" $active={m.active}>
              {m.label}
              {m.more && <Caret />}
            </NavLink>
          ))}
        </NavList>
      </Nav>

      <Hero>
        <Container>
          <HeroTitle>LICITAȚII ȘI ACHIZIȚII PUBLICE</HeroTitle>
          <Crumbs>
            <span>Sunteți aici:</span>
            <Crumb href="#">Acasă</Crumb>
            <Crumb href="#">TRANSPARENȚĂ</Crumb>
            <Crumb href="#">LICITAȚII ȘI ACHIZIȚII PUBLICE</Crumb>
            <CurrentCrumb>Anunț achiziție de „ Servicii de dezvoltare, găzduire și operare a unei platforme GIS"</CurrentCrumb>
          </Crumbs>
        </Container>
      </Hero>

      <Article as="article">
        <ArticleHead>
          <Badge><Glyph size={43} d={glyph.edit} /></Badge>
          <TitleColumn>
            <Title>Anunţ achiziţie de „ Servicii de dezvoltare, găzduire și operare a unei platforme GIS"</Title>
            <Rule />
            <Meta>
              <Glyph size={22} d={glyph.folder} />
              <a href="#">ACHIZIȚII PUBLICE</a>
              <Glyph size={21} d={glyph.eye} />
              <span>Accesări: 354</span>
            </Meta>
          </TitleColumn>
          <Tools>
            <ToolButton type="button" aria-label="Opțiuni articol">
              <svg width="28" height="28" viewBox="0 0 28 28" fill="none" stroke="#777" strokeWidth="1.6">
                <path d="M19 6H1v21h22V11M27 1.5L12 15l-2 4 4-2L27 3z" />
              </svg>
              <svg width="12" height="6" viewBox="0 0 12 6"><path d="M0 0h12L6 6z" fill="#666" /></svg>
            </ToolButton>
          </Tools>
        </ArticleHead>

        <Facts>
          <strong>Dată adăugare:</strong> 2024-04-15<br />
          <strong>Dată expirare:</strong> 2024-04-19<br />
          <strong>Mod atribuire:</strong> achiziție directă<br />
          <strong>Documente:</strong> documentație de atribuire
        </Facts>

        <Heading>{"ANUNȚ DE PUBLICITATE\u00a0"}</Heading>
        <Blank>{"\u00a0"}</Blank>

        <Steps>
          <li>
            <strong>SECTORUL 2 AL MUNICIPIULUI BUCUREȘTI Str.CHIRISTIGIILOR Nr.11-13, TELEFON /FAX: 021. 252.44.46, e-mail:</strong>{" "}
            <MailLink href="mailto:georgiana.spiridon@ps2.ro">georgiana.spiridon@ps2.ro</MailLink>.
          </li>
          <li><strong>TIPUL DE CONTRACT</strong>{": CONTRACT DE ACHIZIȚIE\u00a0\u00a0\u00a0 PUBLICĂ DE PRESTĂRI SERVICII;"}</li>
          <li>
            <strong>
              DENUMIREA PRODUSELOR/SERVICIILOR/LUCRARILOR: „<em>{"Servicii de dezvoltare, găzduire și operare a unei platforme GIS (dedicată activității Direcției Utilități Publice și\u00a0Mediu) ,"}</em>
            </strong>
            <Line>{" avand urmatoarele "}<strong>Coduri CPV:</strong></Line>
          </li>
        </Steps>
        <Bullets>
          <li>{"38221000-0 – Sisteme Informaționale\u00a0 Geografice (Rev.2);"}</li>
          <li>72415000-2 – Servicii de găzduire pentru operare de site-uri WWW (Rev.2);</li>
          <li>98390000-3 – Alte servicii ( Rev.2)</li>
        </Bullets>
        <Steps start={4}>
          <li>
            <strong>VALOAREA ESTIMATĂ A CONTRACTULUI DE ACHIZIȚIE PUBLICĂ este de : 183.000,00 lei fără Tva,</strong> defalcată după cum urmează :
          </li>
        </Steps>
        <Bullets>
          <li>{"Servicii de suport GIS: 150 ore x\u00a0 900 lei/ora = 135.000,00 lei fără Tva;"}</li>
          <li>{"Servicii de găzduire: 12 luni x\u00a0 000 lei/luna\u00a0 =\u00a0 48.000,00 lei fără Tva"}</li>
        </Bullets>
        <Steps start={5}>
          <li><strong>{"TERMENUL LIMITĂ DEPUNERE\u00a0 OFERTE: 19. 04.2024, ora 12.00"}</strong></li>
          <li><strong>ADRESA LA CARE SE TRANSMIT OFERTELE :</strong></li>
        </Steps>
        <Text>
          Operatorii economici interesati vor putea transmite ofertele la adresa de e-mail:{" "}
          <MailLink href="mailto:infopublice@ps2.ro">infopublice@ps2.ro</MailLink> și în CC "carbon copy" (copie de
          informare) la adresa de email: georgiana.{" "}
          <MailLink href="mailto:spiridon@ps2.ro">spiridon@ps2.ro</MailLink>.
        </Text>
        <Steps start={7}>
          <li><strong>LIMBA ÎN CARE TREBUIE REDACTATĂ OFERTA: ROMÂNĂ</strong></li>
          <li><strong>VALABILITATEA OFERTEI: 90 de zile.</strong></li>
          <li><strong>CRITERIUL DE ATRIBUIRE A CONTRACTULUI: <em>Prețul cel mai scăzut..</em></strong></li>
        </Steps>

        <FilesTitle>Atașamente:</FilesTitle>
        <FileTable>
          <tbody>
            <tr>
              <td>
                <WordIcon />
                <FileLink href="#doc">documentatie de achizitie.doc</FileLink>
              </td>
            </tr>
          </tbody>
        </FileTable>

        <Share>
          <ShareLink href="#facebook" $bg="#3b5998" $pad={34}><Glyph size={28} d={glyph.facebook} />Facebook</ShareLink>
          <ShareLink href="#twitter" $bg="#1da1f2" $pad={34}><Glyph size={28} d={glyph.twitter} />Twitter</ShareLink>
          <ShareLink href="#google" $bg="#dd4b39" $pad={18} aria-label="Google+"><FaGooglePlusG size={37} /></ShareLink>
        </Share>

        <Pager>
          <NextButton type="button" aria-label="Articolul următor">
            <svg width="34" height="24" viewBox="0 0 34 24" fill="none" stroke="#3ba3ec" strokeWidth="2">
              <path d="M0 12h33M22 1l11 11-11 11" />
            </svg>
          </NextButton>
        </Pager>
      </Article>

      <CityMap />

      <Footer>© 2024 Primăria Sectorului 2 București.</Footer>

      <TopLink href="#">
        <svg width="66" height="66" viewBox="0 0 66 66" fill="none">
          <circle cx="33" cy="33" r="33" fill="#3ba6ea" />
          <path d="M33 15v36M20 28l13-13 13 13" stroke="#fff" strokeWidth="4" />
        </svg>
        Top
      </TopLink>
    </>
  );
}
